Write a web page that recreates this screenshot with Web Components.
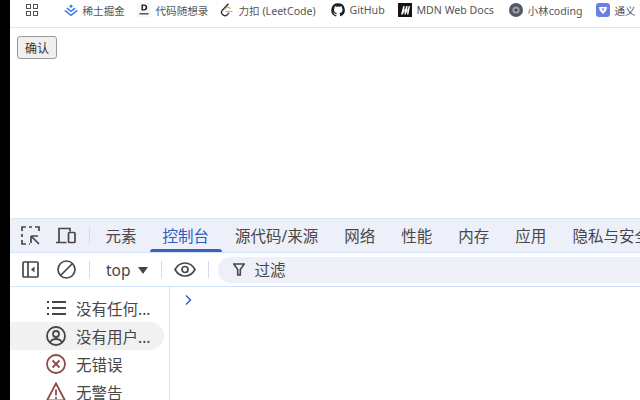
<!DOCTYPE html>
<html>
<head>
<meta charset="utf-8">
<style>
  html, body { margin: 0; height: 100%; overflow: hidden; background: #fff; }
  body { font-family: "Noto Sans", "Noto Sans CJK SC", sans-serif; }
</style>
</head>
<body>
<app-shell>
  <bookmark-bar>
    <book-mark label="稀土掘金" width="73"><svg viewBox="0 0 14 14" width="14" height="14"><path d="M7 1.500 9 3.200 7 4.900 5 3.200Z" fill="#3e79e0"/><path d="M3 5.200 7 8.400l4-3.200M.8 7.300 7 12.300l6.200-5" fill="none" stroke="#3e79e0" stroke-width="1.500"/></svg></book-mark>
    <book-mark label="代码随想录" width="83"><svg viewBox="0 0 14 14" width="14" height="14"><rect width="14" height="14" fill="#f7f7f7"/><path d="M4.500 1.500h2.700c2 0 3 1.100 3 3s-1 3-3 3H4.500ZM6 2.800v3.400h1c1 0 1.600-.6 1.600-1.700S8 2.800 7 2.800Z" fill="#222"/><rect x="2.500" y="10" width="9" height="1.500" fill="#555"/></svg></book-mark>
    <book-mark label="力扣 (LeetCode)" width="111"><svg viewBox="0 0 14 14" width="14" height="14"><path d="M8.500 .8 2.500 7c-1.400 1.500-1.300 3.300 0 4.600 1.400 1.300 3.400 1.300 4.800.1l1.800-1.800" fill="none" stroke="#2a2a2a" stroke-width="1.300"/><path d="M5.500 8.500h7" stroke="#b3b3b3" stroke-width="1.300"/><path d="M4.300 6.600 6.400 4.600c.8-.7 1.800-.7 2.700 0l1.400 1.300" fill="none" stroke="#e0a050" stroke-width="1.200"/></svg></book-mark>
    <book-mark label="GitHub" width="67"><svg viewBox="0 0 16 16" width="14" height="14"><path fill="#1b1f23" d="M8 .3a7.700 7.700 0 0 0-2.400 15c.4.100.5-.2.500-.4v-1.400c-2.100.5-2.500-1-2.500-1-.4-.9-.9-1.100-.9-1.100-.7-.5.100-.5.100-.5.800.1 1.200.8 1.200.8.700 1.200 1.800.9 2.300.7.100-.5.300-.9.500-1.100-1.700-.2-3.400-.8-3.400-3.700 0-.8.300-1.500.8-2-.1-.2-.3-1 .1-2 0 0 .6-.2 2.100.8a7 7 0 0 1 3.800 0c1.400-1 2.100-.8 2.100-.8.400 1 .2 1.800.1 2 .5.500.8 1.200.8 2 0 2.900-1.800 3.500-3.400 3.700.3.200.5.700.5 1.400v2.100c0 .2.100.5.500.4A7.700 7.700 0 0 0 8 .3Z"/></svg></book-mark>
    <book-mark label="MDN Web Docs" width="111"><svg viewBox="0 0 14 14" width="14" height="14"><rect width="14" height="14" fill="#151515"/><path d="M3 11.500 5.200 3h1.300l-.2 5 2-5h1.300l-.6 5 1.800-5H12l-1.600 8.500H9l.3-4-1.700 4H6.500l.2-4-1.900 4Z" fill="#fff"/></svg></book-mark>
    <book-mark label="小林coding" width="87"><svg viewBox="0 0 14 14" width="14" height="14"><circle cx="7" cy="7" r="7" fill="#4c5a70"/><circle cx="7" cy="7" r="3.600" fill="#a89f8c"/><circle cx="7" cy="7" r="1.600" fill="#39465a"/></svg></book-mark>
    <book-mark label="通义" width="50"><svg viewBox="0 0 14 14" width="14" height="14"><rect width="14" height="14" rx="3" fill="#6a80e2"/><path d="M3 4h8l-.8 3.500L7 11 3.800 7.500Z" fill="#fff"/><path d="M5.700 5.500h2.800L7 8Z" fill="#6a80e2"/></svg></book-mark>
  </bookmark-bar>
  <page-area></page-area>
  <dev-tools></dev-tools>
</app-shell>

<template id="book-mark-tpl">
  <style>
    :host { display: flex; align-items: center; gap: 4.500px; flex: none; font-size: 10.600px; color: #555; white-space: nowrap; }
    ::slotted(svg) { display: block; flex: none; }
  </style>
  <slot></slot><span id="t"></span>
</template>

<script>
class AppShell extends HTMLElement {
  constructor() {
    super();
    this.attachShadow({ mode: "open" }).innerHTML = `
      <style>
        :host { display: flex; flex-direction: column; width: 640px; height: 400px; box-sizing: border-box; border-left: 10px solid #000; overflow: hidden; }
      </style>
      <slot></slot>`;
  }
}

class BookmarkBar extends HTMLElement {
  constructor() {
    super();
    this.attachShadow({ mode: "open" }).innerHTML = `
      <style>
        :host { display: flex; align-items: center; flex: none; height: 28px; box-sizing: border-box; padding: 0 0 7px 16px; border-bottom: 1px solid #e1e3e6; background: #fff; overflow: hidden; }
        .apps { display: grid; grid-template-columns: 5px 5px; gap: 2px; margin-right: 14px; }
        .apps i { display: block; width: 5px; height: 5px; box-sizing: border-box; border: 1px solid #555; }
        .sep { width: 1px; height: 14px; background: #d9e2f2; margin-right: 12px; }
      </style>
      <div class="apps"><i></i><i></i><i></i><i></i></div>
      <div class="sep"></div>
      <slot></slot>`;
  }
}

class BookMark extends HTMLElement {
  constructor() {
    super();
    const tpl = document.getElementById("book-mark-tpl");
    this.attachShadow({ mode: "open" }).appendChild(tpl.content.cloneNode(true));
  }
  connectedCallback() {
    this.shadowRoot.getElementById("t").textContent = this.getAttribute("label");
    this.style.width = this.getAttribute("width") + "px";
  }
}

class PageArea extends HTMLElement {
  constructor() {
    super();
    this.attachShadow({ mode: "open" }).innerHTML = `
      <style>
        :host { display: block; flex: none; height: 190px; box-sizing: border-box; padding: 8px 7px; background: #fff; }
        button { display: block; width: 40px; height: 23px; padding: 0; box-sizing: border-box; font: 12px "Noto Sans", "Noto Sans CJK SC", sans-serif; color: #333; background: #efefef; border: 1px solid #9a9a9a; border-radius: 3px; }
      </style>
      <button>确认</button>`;
  }
}

class DevTools extends HTMLElement {
  constructor() {
    super();
    const ink = "#474747";
    const tabs = ["元素", "控制台", "源代码/来源", "网络", "性能", "内存", "应用", "隐私与安全性"];
    this.attachShadow({ mode: "open" }).innerHTML = `
      <style>
        :host { display: flex; flex-direction: column; flex: 1; min-height: 0; background: #fff; font-size: 15.500px; color: ${ink}; }
        svg { display: block; flex: none; }
        .tabs { display: flex; align-items: center; flex: none; height: 35px; box-sizing: border-box; background: #edf0f9; border-top: 1px solid #dfe6f5; border-bottom: 1px solid #d3e3fd; padding-left: 11px; overflow: hidden; white-space: nowrap; }
        .sep { flex: none; width: 1px; height: 17px; background: #d3dcee; }
        .tab { flex: none; height: 33px; display: flex; align-items: center; padding: 0 13px; position: relative; }
        .tab.on { color: #2f5bc4; }
        .tab.on::after { content: ""; position: absolute; left: 0; right: 0; bottom: 0; height: 3px; border-radius: 3px 3px 0 0; background: #4060c0; }
        .bar { display: flex; align-items: center; flex: none; height: 34px; box-sizing: border-box; background: #fff; border-bottom: 1px solid #d3e3fd; padding-left: 12px; }
        .filter { display: flex; align-items: center; gap: 10px; flex: 1; height: 26px; margin-left: 9px; padding-left: 15px; border-radius: 13px 0 0 13px; background: #edf0f9; }
        .top { display: flex; align-items: center; gap: 7px; margin: 0 13px 0 16px; }
        .top i { width: 0; height: 0; border: 5px solid transparent; border-top: 7px solid ${ink}; border-bottom: 0; margin-top: 2px; }
        .body { display: flex; flex: 1; min-height: 0; }
        .side { flex: none; width: 160px; box-sizing: border-box; border-right: 1px solid #d3e3fd; padding-top: 7px; }
        .row { display: flex; align-items: center; gap: 10px; height: 28px; padding-left: 36px; margin-right: 5px; border-radius: 0 14px 14px 0; white-space: nowrap; }
        .row.on { background: #f1f1f1; }
        .main { flex: 1; padding: 8px 0 0 15px; }
      </style>
      <div class="tabs">
        <svg width="19" height="19" viewBox="0 0 19 19" fill="none" stroke="${ink}" stroke-width="1.700"><path d="M1 5V1h4M8 1h3M14 1h4v4M1 8v3M1 14v4h4M8 18h1" /><path d="M10 10h7M10 10v7M10.500 10.500l7.500 7.500"/></svg>
        <svg style="margin-left:16px" width="20" height="17" viewBox="0 0 20 17" fill="none" stroke="${ink}" stroke-width="1.700"><path d="M0 15.500h10.500M3 15V1.500h11v3"/><rect x="12.500" y="5.500" width="6.500" height="10" rx="1"/></svg>
        <div class="sep" style="margin:0 2.500px 0 13px"></div>
        ${tabs.map((t, i) => `<div class="tab${i === 1 ? " on" : ""}">${t}</div>`).join("")}
      </div>
      <div class="bar">
        <svg width="17" height="17" viewBox="0 0 17 17" fill="none" stroke="${ink}" stroke-width="1.700"><rect x="1" y="1" width="15" height="15" rx="1"/><path d="M6 1v15"/><path d="M12.500 5.500v6L9 8.500Z" fill="${ink}" stroke="none"/></svg>
        <svg style="margin-left:18px" width="19" height="19" viewBox="0 0 19 19" fill="none" stroke="${ink}" stroke-width="1.700"><circle cx="9.500" cy="9.500" r="8.500"/><path d="M3.500 15.500 15.500 3.500"/></svg>
        <div class="sep" style="margin-left:13px"></div>
        <div class="top">top <i></i></div>
        <div class="sep"></div>
        <svg style="margin-left:12px" width="22" height="15" viewBox="0 0 22 15" fill="none" stroke="${ink}" stroke-width="1.700"><path d="M1 7.500C3.500 3 6.500 1 11 1s7.500 2 10 6.500C18.500 12 15.500 14 11 14S3.500 12 1 7.500Z"/><circle cx="11" cy="7.500" r="3"/></svg>
        <div class="sep" style="margin-left:12px"></div>
        <div class="filter">
          <svg width="12" height="13" viewBox="0 0 12 13" fill="none" stroke="${ink}" stroke-width="1.600"><path d="M.8 1h10.400L7.300 6.500V12H4.700V6.500Z"/></svg>
          <span>过滤</span>
        </div>
      </div>
      <div class="body">
        <div class="side">
          <div class="row">
            <svg width="20" height="20" viewBox="0 0 20 20" fill="none" stroke="${ink}" stroke-width="1.900"><path d="M1 4h2M6 4h14M1 10h2M6 10h14M1 16h2M6 16h14"/></svg>没有任何...
          </div>
          <div class="row on">
            <svg width="20" height="20" viewBox="0 0 20 20" fill="none" stroke="${ink}" stroke-width="1.800"><circle cx="10" cy="10" r="9"/><circle cx="10" cy="8" r="3"/><path d="M4.500 16c1-2.500 2.500-3 5.500-3s4.500.5 5.500 3"/></svg>没有用户...
          </div>
          <div class="row">
            <svg width="20" height="20" viewBox="0 0 20 20" fill="none" stroke="#8c4a45" stroke-width="1.800"><circle cx="10" cy="10" r="9"/><path d="M6.500 6.500l7 7M13.500 6.500l-7 7"/></svg>无错误
          </div>
          <div class="row">
            <svg width="20" height="20" viewBox="0 0 20 20" fill="none" stroke="#8c4a45" stroke-width="1.800"><path d="M10 1.500 1 18.500h18Z"/><path d="M10 7.500v6M10 15v2"/></svg>无警告
          </div>
        </div>
        <div class="main">
          <svg width="7" height="10" viewBox="0 0 7 10" fill="none" stroke="#3f5fc0" stroke-width="1.500"><path d="M1 .5 5.500 5 1 9.500"/></svg>
        </div>
      </div>`;
  }
}

customElements.define("app-shell", AppShell);
customElements.define("bookmark-bar", BookmarkBar);
customElements.define("book-mark", BookMark);
customElements.define("page-area", PageArea);
customElements.define("dev-tools", DevTools);
</script>
</body>
</html>
